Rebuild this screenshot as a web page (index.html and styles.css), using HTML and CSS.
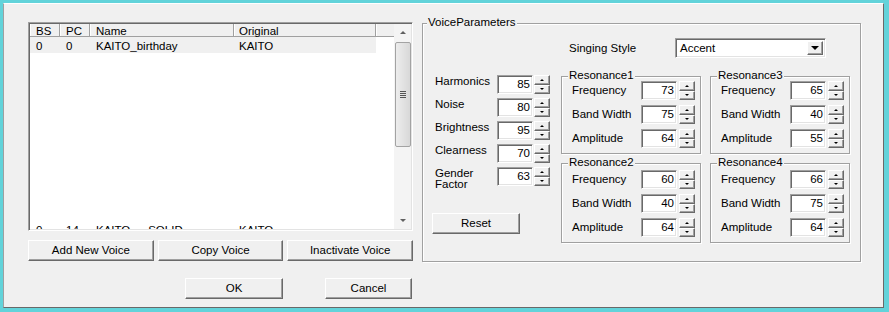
FILE: index.html
```html
<!DOCTYPE html>
<html>
<head>
<meta charset="utf-8">
<link rel="stylesheet" href="styles.css">
</head>
<body>
<div class="win">
  <div class="frame">
    <div class="client">
      <div class="left">
        <div class="list">
          <div class="list-main">
            <div class="lv-head">
              <div class="hc c-bs">BS</div>
              <div class="hc c-pc">PC</div>
              <div class="hc c-name">Name</div>
              <div class="hc c-orig">Original</div>
              <div class="hc c-fill"></div>
            </div>
            <div class="lv-row sel">
              <div class="cell c-bs">0</div>
              <div class="cell c-pc">0</div>
              <div class="cell c-name">KAITO_birthday</div>
              <div class="cell c-orig">KAITO</div>
            </div>
            <div class="lv-gap"></div>
            <div class="lv-row">
              <div class="cell c-bs">0</div>
              <div class="cell c-pc">14</div>
              <div class="cell c-name">KAITO ← SOLID</div>
              <div class="cell c-orig">KAITO</div>
            </div>
          </div>
          <div class="vscroll">
            <div class="sb-btn"><span class="tri-up"></span></div>
            <div class="thumb"><span class="grip"></span></div>
            <div class="sb-track"></div>
            <div class="sb-btn"><span class="tri-dn"></span></div>
          </div>
        </div>
        <div class="btn-row">
          <div class="btn">Add New Voice</div>
          <div class="btn">Copy Voice</div>
          <div class="btn">Inactivate Voice</div>
        </div>
        <div class="ok-row">
          <div class="btn ok">OK</div>
          <div class="btn cancel">Cancel</div>
        </div>
      </div>

      <div class="vp">
        <span class="legend">VoiceParameters</span>
        <div class="style-row">
          <span class="style-label">Singing Style</span>
          <div class="combo"><span class="combo-text">Accent</span><span class="combo-btn"><span class="tri-combo"></span></span></div>
        </div>
        <div class="cols">
          <div class="params">
            <div class="prow"><span class="plabel">Harmonics</span><div class="num">85</div><div class="spin"><span class="sp"><span class="tri-up"></span></span><span class="sp"><span class="tri-dn"></span></span></div></div>
            <div class="prow"><span class="plabel">Noise</span><div class="num">80</div><div class="spin"><span class="sp"><span class="tri-up"></span></span><span class="sp"><span class="tri-dn"></span></span></div></div>
            <div class="prow"><span class="plabel">Brightness</span><div class="num">95</div><div class="spin"><span class="sp"><span class="tri-up"></span></span><span class="sp"><span class="tri-dn"></span></span></div></div>
            <div class="prow"><span class="plabel">Clearness</span><div class="num">70</div><div class="spin"><span class="sp"><span class="tri-up"></span></span><span class="sp"><span class="tri-dn"></span></span></div></div>
            <div class="prow"><span class="plabel two">Gender<br>Factor</span><div class="num">63</div><div class="spin"><span class="sp"><span class="tri-up"></span></span><span class="sp"><span class="tri-dn"></span></span></div></div>
            <div class="btn reset">Reset</div>
          </div>

          <div class="rcol">
            <div class="res r-top">
              <span class="legend rleg">Resonance1</span>
              <div class="rrow"><span class="rlabel">Frequency</span><div class="num">73</div><div class="spin"><span class="sp"><span class="tri-up"></span></span><span class="sp"><span class="tri-dn"></span></span></div></div>
              <div class="rrow"><span class="rlabel">Band Width</span><div class="num">75</div><div class="spin"><span class="sp"><span class="tri-up"></span></span><span class="sp"><span class="tri-dn"></span></span></div></div>
              <div class="rrow"><span class="rlabel">Amplitude</span><div class="num">64</div><div class="spin"><span class="sp"><span class="tri-up"></span></span><span class="sp"><span class="tri-dn"></span></span></div></div>
            </div>
            <div class="res r-bot">
              <span class="legend rleg">Resonance2</span>
              <div class="rrow"><span class="rlabel">Frequency</span><div class="num">60</div><div class="spin"><span class="sp"><span class="tri-up"></span></span><span class="sp"><span class="tri-dn"></span></span></div></div>
              <div class="rrow"><span class="rlabel">Band Width</span><div class="num">40</div><div class="spin"><span class="sp"><span class="tri-up"></span></span><span class="sp"><span class="tri-dn"></span></span></div></div>
              <div class="rrow"><span class="rlabel">Amplitude</span><div class="num">64</div><div class="spin"><span class="sp"><span class="tri-up"></span></span><span class="sp"><span class="tri-dn"></span></span></div></div>
            </div>
          </div>

          <div class="rcol">
            <div class="res r-top">
              <span class="legend rleg">Resonance3</span>
              <div class="rrow"><span class="rlabel">Frequency</span><div class="num">65</div><div class="spin"><span class="sp"><span class="tri-up"></span></span><span class="sp"><span class="tri-dn"></span></span></div></div>
              <div class="rrow"><span class="rlabel">Band Width</span><div class="num">40</div><div class="spin"><span class="sp"><span class="tri-up"></span></span><span class="sp"><span class="tri-dn"></span></span></div></div>
              <div class="rrow"><span class="rlabel">Amplitude</span><div class="num">55</div><div class="spin"><span class="sp"><span class="tri-up"></span></span><span class="sp"><span class="tri-dn"></span></span></div></div>
            </div>
            <div class="res r-bot">
              <span class="legend rleg">Resonance4</span>
              <div class="rrow"><span class="rlabel">Frequency</span><div class="num">66</div><div class="spin"><span class="sp"><span class="tri-up"></span></span><span class="sp"><span class="tri-dn"></span></span></div></div>
              <div class="rrow"><span class="rlabel">Band Width</span><div class="num">75</div><div class="spin"><span class="sp"><span class="tri-up"></span></span><span class="sp"><span class="tri-dn"></span></span></div></div>
              <div class="rrow"><span class="rlabel">Amplitude</span><div class="num">64</div><div class="spin"><span class="sp"><span class="tri-up"></span></span><span class="sp"><span class="tri-dn"></span></span></div></div>
            </div>
          </div>
        </div>
      </div>
    </div>
  </div>
</div>
</body>
</html>
```
FILE: styles.css
```css
* { box-sizing: border-box; }
html, body { margin: 0; padding: 0; }
body {
  font-family: "Liberation Sans", Arial, sans-serif;
  font-size: 11.5px;
  color: #000;
  background: #f0f0f0;
}

.win {
  width: 889px;
  height: 312px;
  border-style: solid;
  border-color: #62d3da;
  border-width: 3px 5px 4px 3px;
}
.frame {
  height: 100%;
  border: 1px solid;
  border-color: #fff #696969 #696969 #a0a0a0;
  background: #f0f0f0;
}
.client {
  display: flex;
  align-items: flex-start;
  padding: 18px 0 0 24px;
}

/* ---------- left column ---------- */
.left {
  width: 385px;
  display: flex;
  flex-direction: column;
}
.list {
  height: 209px;
  display: flex;
  border: 1px solid;
  border-color: #a0a0a0 #fff #fff #a0a0a0;
  padding: 1px;
  background: #fff;
  box-shadow: inset 1px 1px #696969, inset -1px -1px #e3e3e3;
}
.list-main {
  flex: 1;
  display: flex;
  flex-direction: column;
  overflow: hidden;
  background: #fff;
}
.lv-head {
  display: flex;
  height: 13px;
  flex: none;
  background: #f0f0f0;
  border-bottom: 1px solid #a0a0a0;
}
.hc {
  height: 12px;
  line-height: 14px;
  padding-left: 6px;
  border-right: 1px solid #a0a0a0;
  box-shadow: inset 1px 0 #fff;
  white-space: nowrap;
}
.c-bs { width: 30px; flex: none; }
.c-pc { width: 30px; flex: none; }
.c-name { width: 144px; flex: none; }
.c-orig { width: 142px; flex: none; padding-left: 5px; }
.c-fill { flex: 1; border-right: none; }

.lv-row {
  display: flex;
  height: 16px;
  flex: none;
}
.cell {
  height: 16px;
  line-height: 14px;
  padding-top: 2px;
  padding-left: 6px;
  white-space: nowrap;
}
.cell.c-orig { padding-left: 5px; }
.lv-row.sel .cell { background: #f0f0f0; }
.lv-gap { height: 168px; flex: none; }

.vscroll {
  width: 17px;
  flex: none;
  display: flex;
  flex-direction: column;
  background: #f4f4f4;
}
.sb-btn {
  height: 17px;
  flex: none;
  display: flex;
  align-items: center;
  justify-content: center;
}
.thumb {
  height: 105px;
  margin: 1px 0 0 1px;
  flex: none;
  border: 1px solid #a3a3a3;
  border-radius: 2px;
  background: linear-gradient(to right, #ededed, #d8d8d8);
  display: flex;
  align-items: center;
  justify-content: center;
}
.grip {
  width: 6px;
  height: 7px;
  background: repeating-linear-gradient(to bottom, #555 0 1px, transparent 1px 2px);
}
.sb-track { flex: 1; }

.tri-up {
  width: 0; height: 0;
  border-left: 3px solid transparent;
  border-right: 3px solid transparent;
  border-bottom: 3px solid #606060;
}
.tri-dn {
  width: 0; height: 0;
  border-left: 3px solid transparent;
  border-right: 3px solid transparent;
  border-top: 3px solid #606060;
}

.btn {
  height: 21px;
  line-height: 19px;
  text-align: center;
  background: #f0f0f0;
  border: 1px solid;
  border-color: #fff #696969 #696969 #fff;
  box-shadow: inset -1px -1px #a0a0a0;
  white-space: nowrap;
}
.btn-row {
  display: flex;
  gap: 4px;
  margin-top: 9px;
}
.btn-row .btn { flex: 1; }
.ok-row {
  display: flex;
  margin-top: 17px;
}
.ok { width: 98px; margin-left: 157px; }
.cancel { width: 87px; margin-left: 42px; }

/* ---------- voice parameters ---------- */
.vp {
  position: relative;
  width: 439px;
  height: 239px;
  margin: 1px 0 0 9px;
  padding: 14px 0 0 9px;
  border: 1px solid #a0a0a0;
  box-shadow: inset 1px 1px #fff, 1px 1px #fff;
}
.legend {
  position: absolute;
  top: -8px;
  left: 4px;
  padding: 0 1px;
  line-height: 13px;
  background: #f0f0f0;
  white-space: nowrap;
}
.style-row {
  display: flex;
  height: 20px;
}
.style-label {
  width: 106px;
  margin-left: 137px;
  line-height: 20px;
}
.combo {
  width: 151px;
  height: 20px;
  display: flex;
  align-items: center;
  justify-content: space-between;
  background: #fff;
  border: 1px solid;
  border-color: #a0a0a0 #fff #fff #a0a0a0;
  box-shadow: inset 1px 1px #696969, inset -1px -1px #e3e3e3;
  padding: 2px 2px 2px 4px;
}
.combo-text { line-height: 14px; }
.combo-btn {
  width: 16px;
  height: 14px;
  display: flex;
  align-items: center;
  justify-content: center;
  background: #f0f0f0;
  border: 1px solid;
  border-color: #fff #696969 #696969 #fff;
  box-shadow: inset -1px -1px #a0a0a0;
}
.tri-combo {
  width: 0; height: 0;
  border-left: 4px solid transparent;
  border-right: 4px solid transparent;
  border-top: 4px solid #000;
}

.cols {
  display: flex;
  align-items: flex-start;
  margin-top: 17px;
}
.params {
  width: 118px;
  display: flex;
  flex-direction: column;
}
.prow {
  display: flex;
  align-items: flex-start;
  height: 23px;
}
.plabel {
  width: 65px;
  padding-left: 3px;
  line-height: 12px;
  white-space: nowrap;
}
.plabel.two { line-height: 11px; padding-top: 1px; }

.num {
  width: 36px;
  height: 19px;
  flex: none;
  background: #fff;
  border: 1px solid;
  border-color: #a0a0a0 #fff #fff #a0a0a0;
  box-shadow: inset 1px 1px #696969, inset -1px -1px #e3e3e3;
  text-align: right;
  padding-right: 2px;
  line-height: 17px;
}
.spin {
  width: 16px;
  height: 19px;
  flex: none;
  margin-left: 1px;
  display: flex;
  flex-direction: column;
}
.sp {
  flex: 1;
  display: flex;
  align-items: center;
  justify-content: center;
  background: #f0f0f0;
  border: 1px solid;
  border-color: #fff #696969 #696969 #fff;
  box-shadow: inset -1px -1px #a0a0a0;
}
.sp .tri-up, .sp .tri-dn {
  border-left-width: 2px;
  border-right-width: 2px;
  border-top-color: #000;
  border-bottom-color: #000;
}
.sp .tri-up { border-bottom-width: 2px; }
.sp .tri-dn { border-top-width: 2px; }

.reset {
  width: 88px;
  margin-top: 23px;
}

.rcol {
  width: 140px;
  margin-left: 11px;
  display: flex;
  flex-direction: column;
}
.rcol + .rcol { margin-left: 9px; }
.res {
  position: relative;
  display: flex;
  flex-direction: column;
  gap: 5px;
  padding-left: 10px;
  border: 1px solid #a0a0a0;
  box-shadow: inset 1px 1px #fff, 1px 1px #fff;
}
.r-top { margin-top: 1px; padding-top: 4px; padding-bottom: 5px; }
.r-bot { margin-top: 9px; padding-top: 6px; padding-bottom: 5px; }
.rleg { top: -8px; left: 6px; }
.rrow {
  display: flex;
  align-items: center;
  height: 19px;
}
.rlabel {
  width: 69px;
  line-height: 17px;
  white-space: nowrap;
}
.rrow .spin { margin-left: 2px; }
```
